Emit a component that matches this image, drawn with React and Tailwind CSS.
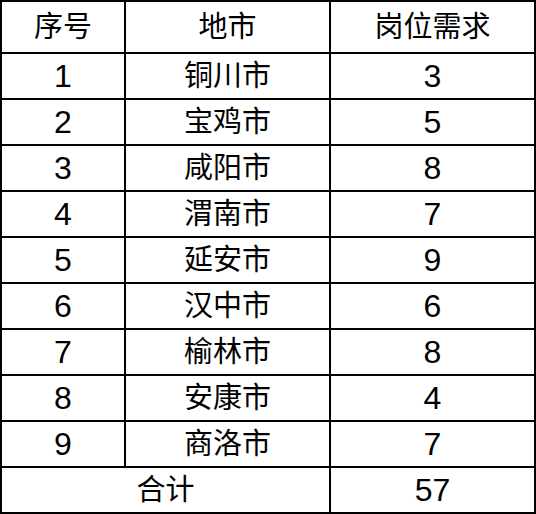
import React from 'react';

// 各地市岗位需求表
const rows = [
  { no: 1, city: '铜川市', need: 3 },
  { no: 2, city: '宝鸡市', need: 5 },
  { no: 3, city: '咸阳市', need: 8 },
  { no: 4, city: '渭南市', need: 7 },
  { no: 5, city: '延安市', need: 9 },
  { no: 6, city: '汉中市', need: 6 },
  { no: 7, city: '榆林市', need: 8 },
  { no: 8, city: '安康市', need: 4 },
  { no: 9, city: '商洛市', need: 7 },
];

const cell = 'flex items-center justify-center border-r-2 border-b-2 border-black';
const num = 'text-[32px]';
const zh = 'text-[29px]';

export default function App() {
  const total = rows.reduce((sum, r) => sum + r.need, 0);

  return (
    <div
      className="w-[536px] bg-white text-black leading-none"
      style={{ fontFamily: '"Liberation Sans", "Noto Sans CJK SC", sans-serif' }}
    >
      <div className="grid grid-cols-[124px_205px_205px] border-t-2 border-l-2 border-black">
        <div className={`${cell} ${zh} h-[52px]`}>序号</div>
        <div className={`${cell} ${zh} h-[52px]`}>地市</div>
        <div className={`${cell} ${zh} h-[52px]`}>岗位需求</div>

        {rows.map((r) => (
          <React.Fragment key={r.no}>
            <div className={`${cell} ${num} h-[46px]`}>{r.no}</div>
            <div className={`${cell} ${zh} h-[46px]`}>{r.city}</div>
            <div className={`${cell} ${num} h-[46px]`}>{r.need}</div>
          </React.Fragment>
        ))}

        {/* 合计 */}
        <div className={`${cell} ${zh} col-span-2 h-[46px]`}>合计</div>
        <div className={`${cell} ${num} h-[46px]`}>{total}</div>
      </div>
    </div>
  );
}
